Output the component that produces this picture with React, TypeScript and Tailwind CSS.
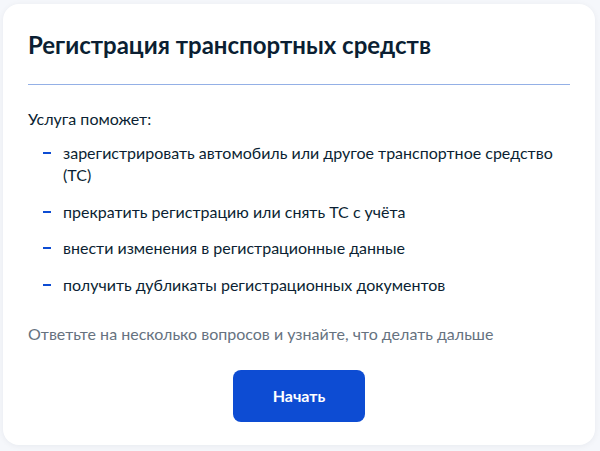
const items = [
  'зарегистрировать автомобиль или другое транспортное средство (ТС)',
  'прекратить регистрацию или снять ТС с учёта',
  'внести изменения в регистрационные данные',
  'получить дубликаты регистрационных документов',
];

export default function App() {
  return (
    <div className="min-h-[451px] w-[600px] bg-[#f5f7fb] pt-[4px] pl-[3px] font-['Lato','Noto_Sans',sans-serif] text-[#0b1f33]">
      <div className="w-[592px] rounded-[16px] bg-white px-[25px] pt-[25px] pb-[23px] shadow-[0_1px_6px_rgba(11,31,51,0.06)]">
        <h1 className="text-[24px] leading-[32px] font-bold">Регистрация транспортных средств</h1>
        <div className="mt-[23px] h-px bg-[#94b0e6]" />
        <p className="mt-[22px] text-[16px] leading-[24px]">Услуга поможет:</p>
        <ul className="mt-[11px] flex flex-col gap-[14.5px]">
          {items.map((t) => (
            <li key={t} className="flex text-[16px] leading-[22px]">
              <span className="mt-[10px] ml-[15px] mr-[12px] h-[2px] w-[8px] shrink-0 bg-[#0d4cd3]" />
              <span>{t}</span>
            </li>
          ))}
        </ul>
        <p className="mt-[27px] text-[16px] leading-[22px] text-[#66727f]">
          Ответьте на несколько вопросов и узнайте, что делать дальше
        </p>
        <div className="mt-[25px] flex justify-center">
          <button className="h-[52px] w-[132px] rounded-[8px] bg-[#0d4cd3] text-[16px] font-bold text-white">
            Начать
          </button>
        </div>
      </div>
    </div>
  );
}
